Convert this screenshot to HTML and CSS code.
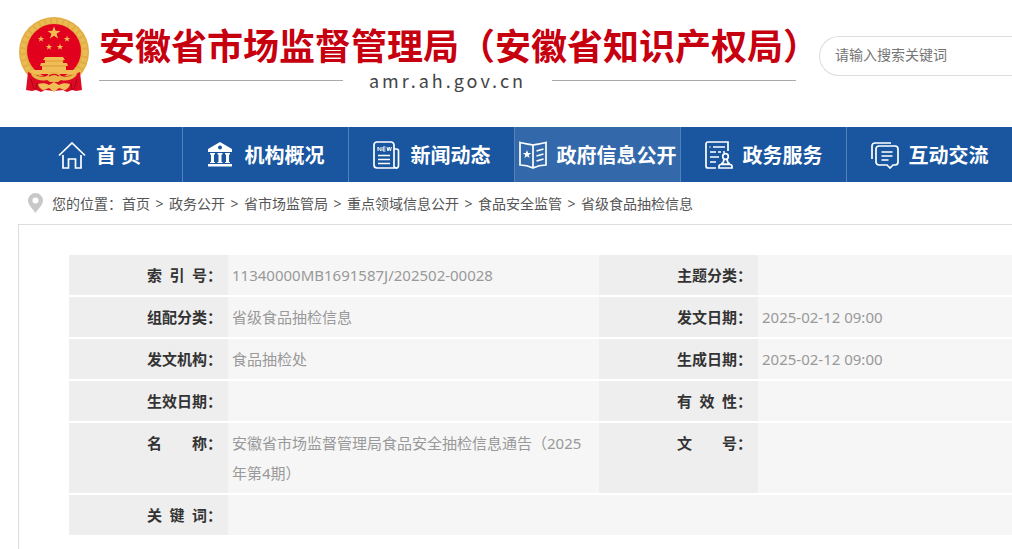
FILE: index.html
```html
<!DOCTYPE html>
<html lang="zh-CN">
<head>
    <meta charset="UTF-8">
    <meta name="viewport" content="width=device-width, initial-scale=1.0">
    <title>安徽省市场监督管理局（安徽省知识产权局）</title>
    <link rel="stylesheet" href="styles.css">
</head>
<body>
    <header class="header">
        <svg class="emblem" viewBox="0 0 72 80" aria-hidden="true">
            <defs>
                <path id="star" d="M0-10 2.4-3.2 9.5-3.1 3.8 1.2 5.9 8.1 0 4 -5.9 8.1 -3.8 1.2 -9.5-3.1 -2.4-3.2z"/>
            </defs>
            <circle cx="36" cy="36" r="35" fill="#e2ad42"/>
            <circle cx="36" cy="36" r="31" fill="none" stroke="#e9bb55" stroke-width="5" stroke-dasharray="4 2"/>
            <circle cx="36" cy="35" r="27" fill="#e2001f"/>
            <g fill="#f0bd55">
                <use href="#star" transform="translate(36 17) scale(.68)"/>
                <use href="#star" transform="translate(23 23) scale(.34)"/>
                <use href="#star" transform="translate(49 23) scale(.34)"/>
                <use href="#star" transform="translate(31 31) scale(.34)"/>
                <use href="#star" transform="translate(42 31) scale(.34)"/>
                <path d="M27 41h18l2 3h-2v3h4l1 3h-2v4h12l2 4H10l2-4h12v-4h-2l1-3h4v-3h-2z"/>
            </g>
            <path d="M26 45h20M24 50h24" stroke="#d5812c" stroke-width=".6"/>
            <path d="M10 56c4 2 8 3 12 4h28c4-1 8-2 12-4l2 18-6 1-4-1-5 2-4-2-9 1-9-1-4 2-5-2-4 1-6-1z" fill="#dc0a22"/>
            <path d="M13 63l3 10M59 63l-3 10M19 67l-1 7M53 67l1 7" stroke="#a80318" stroke-width="1"/>
            <path d="M11 53c5 7 12 9 18 7l3-4h8l3 4c6 2 13 0 18-7l-3 7c-5 5-11 5-15 4l-3 2h-8l-3-2c-4 1-10 1-15-4z" fill="#eab449"/>
            <path d="M20 68c4-1 8-1 11 1l5-3 5 3c3-2 7-2 11-1-1 4-4 6-6 6l-5-2-5 4-5-4-5 2c-2 0-5-2-6-6z" fill="#f0bd57"/>
            <path d="M31 60c3-2 7-2 10 0" fill="none" stroke="#d80b22" stroke-width="1.200"/>
        </svg>
        <div class="brand">
            <h1 class="brand-title">安徽省市场监督管理局（安徽省知识产权局）</h1>
            <div class="brand-domain">amr.ah.gov.cn</div>
        </div>
        <form class="search">
            <input class="search-input" type="text" aria-label="搜索" placeholder="请输入搜索关键词">
        </form>
    </header>

    <nav class="main-nav">
        <a class="nav-item" href="#">
            <svg class="nav-icon" viewBox="0 0 28 28" aria-hidden="true">
                <path d="M1 14.500 14 2l13 12.500M5 14v13h5.500v-9h7v9H23V14"/>
            </svg>
            首 页
        </a>
        <a class="nav-item" href="#">
            <svg class="nav-icon" viewBox="0 0 28 28" aria-hidden="true">
                <path class="solid" fill-rule="evenodd" d="M13 1 25 8v3H1V8zM13 4.500a2 2 0 1 0 0 4 2 2 0 0 0 0-4zM3 12h5v1.500H7V21h1v1H3v-1h1v-7.500H3zM10.500 12h5v1.500h-1V21h1v1h-5v-1h1v-7.500h-1zM18 12h5v1.500h-1V21h1v1h-5v-1h1v-7.500h-1zM1 23h24v2.500H1z"/>
            </svg>
            机构概况
        </a>
        <a class="nav-item" href="#">
            <svg class="nav-icon" viewBox="0 0 28 28" aria-hidden="true">
                <path d="M21 24V4a3 3 0 0 0-3-3H4a3 3 0 0 0-3 3v20a3 3 0 0 0 3 3h19a2.500 2.500 0 0 0 2.500-2.500V10a2 2 0 0 0-2-2H21M21 24a2.500 2.500 0 0 0 3 3M5 14.500h12M5 18.500h12M5 22.500h12"/>
                <path class="thin" d="M5 10V6l3 4V6M12.500 6H10v4h2.500M10 8h2.500M14 6l1 4 1.200-4 1.200 4 1-4"/>
            </svg>
            新闻动态
        </a>
        <a class="nav-item active" href="#">
            <svg class="nav-icon" viewBox="0 0 28 28" aria-hidden="true">
                <path d="M14 4C10 3 6 3 1 1.500V24c5 0 9 1 13 3 4-2 8-3 13-3V1.500C22 3 18 3 14 4zv23M17.500 10l7-2M17.500 15l7-2M17.500 20l7-2"/>
                <path class="solid" d="M8 9l1.100 3 3.100.1-2.500 1.900.9 3L8 15.300 5.400 17l.9-3-2.500-1.900 3.100-.1z"/>
            </svg>
            政府信息公开
        </a>
        <a class="nav-item" href="#">
            <svg class="nav-icon" viewBox="0 0 28 28" aria-hidden="true">
                <path d="M23 10V1H3a2 2 0 0 0-2 2v22a2 2 0 0 0 2 2h8M8 6h12M4.500 6h1M5 11h6M13 11h3M18 11h2M5 16h9M5 21h6"/>
                <circle cx="20.500" cy="15.500" r="2.800"/>
                <path d="M19 18c0 3-1 4-3 5h9c-2-1-3-2-3-5M16 23.500h9a2 2 0 0 1 2 2V27H14v-1.500a2 2 0 0 1 2-2z"/>
            </svg>
            政务服务
        </a>
        <a class="nav-item" href="#">
            <svg class="nav-icon" viewBox="0 0 28 28" aria-hidden="true">
                <path d="M1 18V5a3 3 0 0 1 3-3h16M8 5h16a3 3 0 0 1 3 3v13a3 3 0 0 1-3 3h-2l-3 3-3-3H8a3 3 0 0 1-3-3V8a3 3 0 0 1 3-3zM10.500 11h11M10.500 15h11M10.500 19h7"/>
            </svg>
            互动交流
        </a>
    </nav>

    <nav class="breadcrumb" aria-label="您的位置">
        <svg class="pin" viewBox="0 0 15 20" aria-hidden="true">
            <path fill="#c8c8c8" fill-rule="evenodd" d="M7.500 0A7.500 7.500 0 0 1 15 7.500C15 12 10 16 7.500 20 5 16 0 12 0 7.500A7.500 7.500 0 0 1 7.500 0zm0 4.500a3 3 0 1 0 0 6 3 3 0 0 0 0-6z"/>
        </svg>
        <span>您的位置：</span>
        <a href="#">首页</a><span class="sep">&gt;</span>
        <a href="#">政务公开</a><span class="sep">&gt;</span>
        <a href="#">省市场监管局</a><span class="sep">&gt;</span>
        <a href="#">重点领域信息公开</a><span class="sep">&gt;</span>
        <a href="#">食品安全监管</a><span class="sep">&gt;</span>
        <a href="#">省级食品抽检信息</a>
    </nav>

    <main class="content">
        <table class="info-table">
            <colgroup>
                <col class="col-label">
                <col class="col-value">
                <col class="col-label">
                <col>
            </colgroup>
            <tbody>
                <tr>
                    <th scope="row">索&ensp;引&ensp;号：</th>
                    <td>11340000MB1691587J/202502-00028</td>
                    <th scope="row">主题分类：</th>
                    <td></td>
                </tr>
                <tr>
                    <th scope="row">组配分类：</th>
                    <td>省级食品抽检信息</td>
                    <th scope="row">发文日期：</th>
                    <td>2025-02-12 09:00</td>
                </tr>
                <tr>
                    <th scope="row">发文机构：</th>
                    <td>食品抽检处</td>
                    <th scope="row">生成日期：</th>
                    <td>2025-02-12 09:00</td>
                </tr>
                <tr>
                    <th scope="row">生效日期：</th>
                    <td></td>
                    <th scope="row">有&ensp;效&ensp;性：</th>
                    <td></td>
                </tr>
                <tr>
                    <th scope="row">名&emsp;&emsp;称：</th>
                    <td>安徽省市场监督管理局食品安全抽检信息通告（2025年第4期）</td>
                    <th scope="row">文&emsp;&emsp;号：</th>
                    <td></td>
                </tr>
                <tr>
                    <th scope="row">关&ensp;键&ensp;词：</th>
                    <td colspan="3"></td>
                </tr>
            </tbody>
        </table>
    </main>
</body>
</html>
```

FILE: styles.css
```css
* {
    margin: 0;
    padding: 0;
    box-sizing: border-box;
}

body {
    font-family: "Noto Sans", "Noto Sans CJK SC", sans-serif;
    font-size: 14px;
    color: #555;
    background: #fff;
    min-height: 100vh;
    display: flex;
    flex-direction: column;
}

a {
    color: inherit;
    text-decoration: none;
}

/* header */
.header {
    display: flex;
    align-items: center;
    padding: 16px 0 31px 18px;
}

.emblem {
    width: 72px;
    height: 80px;
    margin-right: 9px;
    flex-shrink: 0;
}

.brand {
    padding-top: 4px;
    flex-shrink: 0;
}

.brand-title {
    font-family: "Noto Sans CJK SC", sans-serif;
    font-size: 36px;
    line-height: 44px;
    font-weight: 700;
    color: #c7000f;
    white-space: nowrap;
}

.brand-domain {
    display: flex;
    align-items: center;
    gap: 26px;
    padding-right: 23px;
    font-family: "Noto Sans CJK SC", sans-serif;
    font-size: 18px;
    line-height: 28px;
    letter-spacing: 3px;
    color: #444;
}

.brand-domain::before,
.brand-domain::after {
    content: "";
    flex: 1;
    height: 1px;
    background: #aaa;
}

.search {
    flex: 1;
    min-width: 0;
}

.search-input {
    width: 100%;
    height: 40px;
    padding: 0 15px 3px;
    border: 1px solid #ddd;
    border-right: none;
    border-radius: 20px 0 0 20px;
    font-family: inherit;
    font-size: 14px;
    outline: none;
}

.search-input::placeholder {
    color: #757575;
}

/* main navigation */
.main-nav {
    display: flex;
    padding-left: 16px;
    background: #19569f;
}

.nav-item {
    flex: 1;
    display: flex;
    align-items: center;
    justify-content: center;
    gap: 10px;
    height: 55px;
    border-left: 1px solid #5283bb;
    font-size: 20px;
    font-weight: 700;
    color: #fff;
    white-space: nowrap;
}

.nav-item:first-child {
    border-left-color: transparent;
}

.nav-item.active,
.nav-item:hover {
    background: #3369aa;
}

.nav-icon {
    width: 28px;
    height: 28px;
    flex-shrink: 0;
    fill: none;
    stroke: #fff;
    stroke-width: 1.7;
}

.nav-icon .solid {
    fill: #fff;
    stroke: none;
}

.nav-icon .thin {
    stroke-width: 1;
}

/* breadcrumb */
.breadcrumb {
    display: flex;
    align-items: center;
    height: 42px;
    padding-left: 28px;
    white-space: nowrap;
}

.pin {
    width: 15px;
    height: 20px;
    margin-right: 9px;
}

.sep {
    width: 19px;
    text-align: center;
}

/* document info */
.content {
    flex: 1;
    margin-left: 18px;
    padding: 30px 0 10px 50px;
    border-top: 1px solid #ddd;
    border-left: 1px solid #ddd;
}

.info-table {
    width: 100%;
    table-layout: fixed;
    border-collapse: separate;
    border-spacing: 0;
    font-size: 15px;
    line-height: 30px;
}

.col-label {
    width: 159px;
}

.col-value {
    width: 371px;
}

.info-table th,
.info-table td {
    height: 42px;
    padding: 5px 6px 5px 4px;
    vertical-align: top;
    border-bottom: 2px solid #fff;
}

.info-table th {
    text-align: right;
    font-weight: 700;
    color: #333;
    background: #eee;
}

.info-table td {
    color: #999;
    background: #f6f6f6;
}
```
